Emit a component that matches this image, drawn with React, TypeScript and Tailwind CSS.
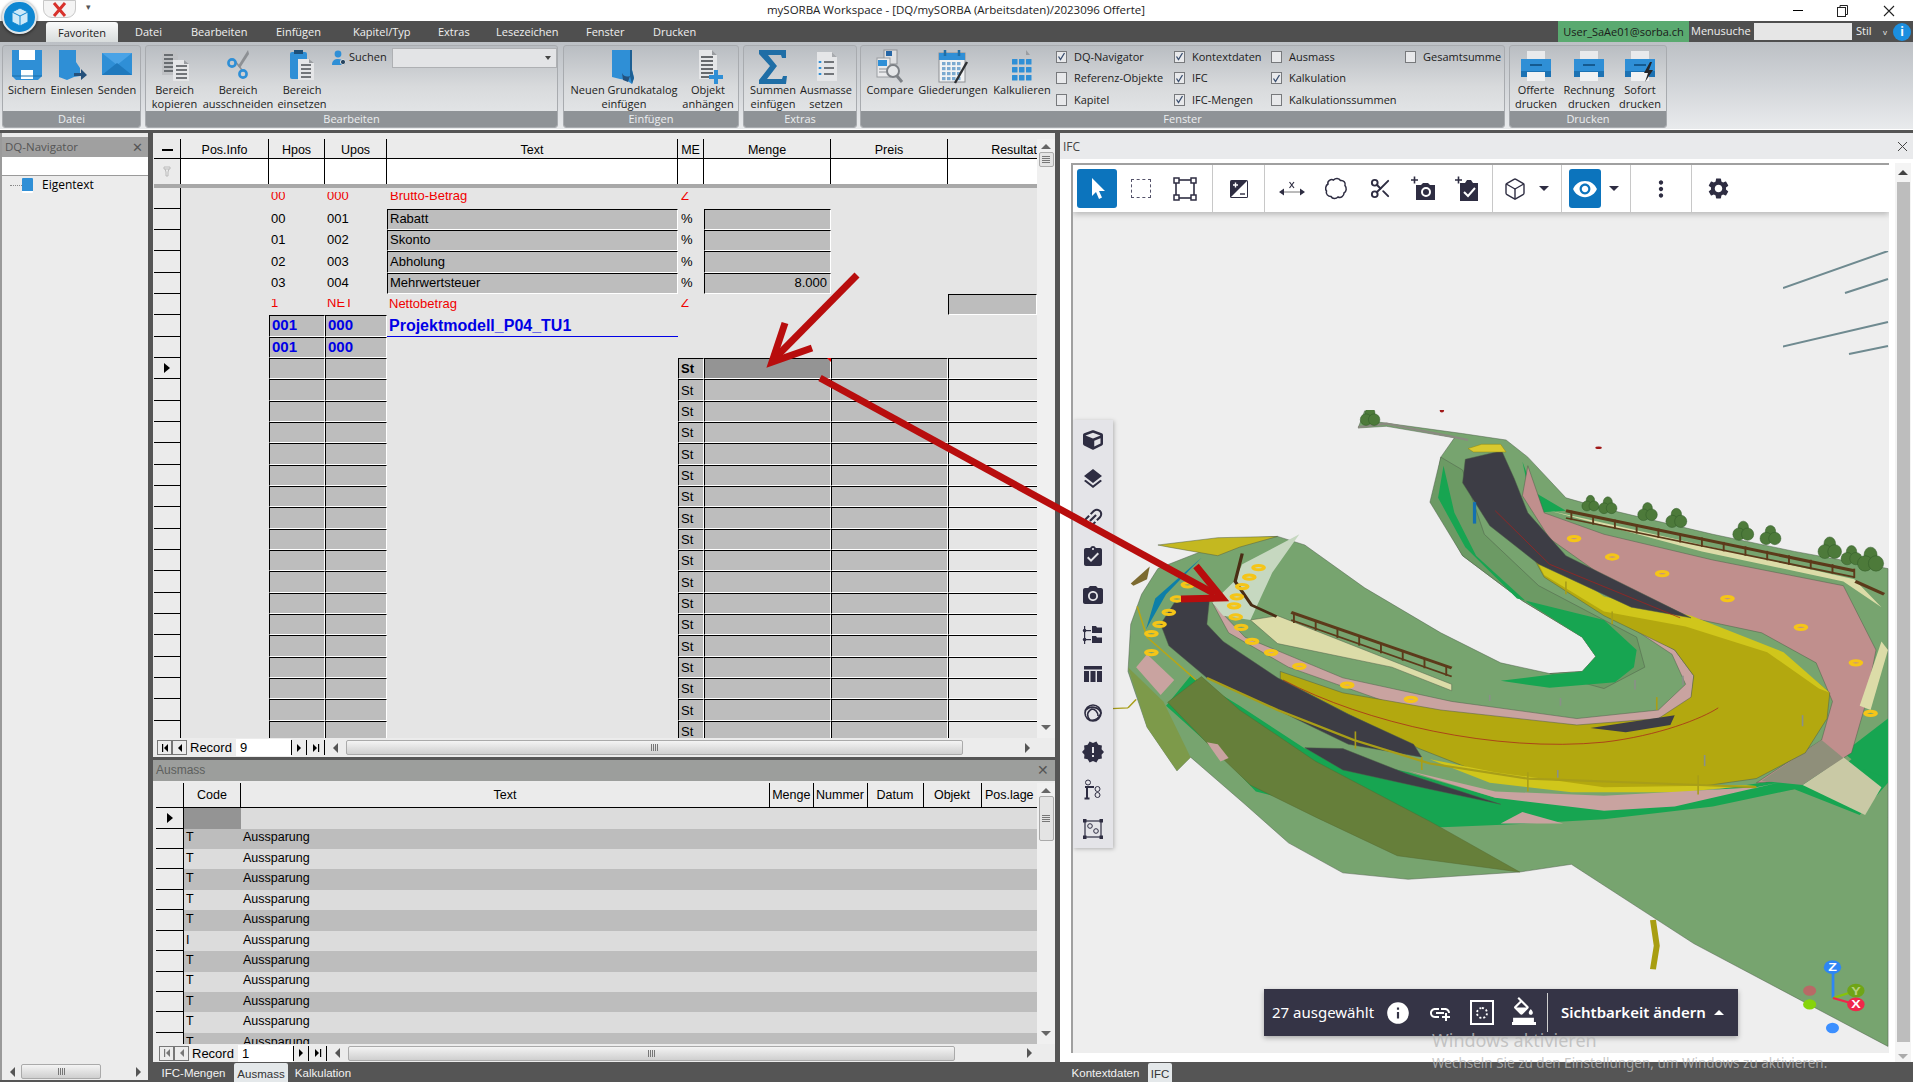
import type { ReactNode } from 'react'
import { Box, Scissors } from 'lucide-react'
import {
  MdAddLink,
  MdAssignmentTurnedIn,
  MdFormatColorFill,
  MdInfo,
  MdLayers,
  MdLink,
  MdMoreVert,
  MdNewReleases,
  MdPhotoCamera,
  MdSettings,
  MdVisibility,
} from 'react-icons/md'
import { FaCube } from 'react-icons/fa'

const blue = '#2f8fd6'
const navy = '#2e2d42'

/* ---------- ribbon icons ---------- */

function IconSave() {
  return (
    <svg width="32" height="32" viewBox="0 0 32 32">
      <path d="M1 1h30v26l-4 4H5l-4-4z" fill={blue} />
      <rect x="8" y="1" width="16" height="10" fill="#fff" />
      <rect x="10" y="21" width="12" height="9" fill="#fff" />
      <path d="M1 27h30" stroke="#1c6ea8" strokeWidth="1" />
    </svg>
  )
}

function IconBookArrow() {
  return (
    <svg width="32" height="32" viewBox="0 0 32 32">
      <path d="M3 1h17v12l4 6v8l-6 1-7 3-8-3z" fill={blue} />
      <path d="M18 24h7v-4l6 6-6 5v-4h-7z" fill="#25507a" />
    </svg>
  )
}

function IconMail() {
  return (
    <svg width="32" height="32" viewBox="0 0 32 32">
      <rect x="1" y="4" width="30" height="22" fill={blue} />
      <path d="M1 4l15 12L31 4z" fill="#4aa3e6" />
      <path d="M1 26l15-12 15 12z" fill="#1f79bd" />
    </svg>
  )
}

function DocLines({ x, y, w, n, color = '#4b4f55' }: { x: number; y: number; w: number; n: number; color?: string }) {
  return (
    <g stroke={color} strokeWidth="1.6">
      {Array.from({ length: n }).map((_, i) => (
        <path key={i} d={`M${x} ${y + i * 4}h${w}`} />
      ))}
    </g>
  )
}

function IconCopy() {
  return (
    <svg width="32" height="32" viewBox="0 0 32 32">
      <path d="M3 2h13l3 4v20H3z" fill="#bfc1c4" />
      <DocLines x={5} y={6} w={9} n={5} />
      <path d="M14 11h11l5 4v17H14z" fill="#e5e6e8" />
      <path d="M25 11l5 4h-5z" fill="#9a9da1" />
      <DocLines x={17} y={17} w={11} n={4} />
    </svg>
  )
}

function IconCut() {
  return (
    <svg width="32" height="32" viewBox="0 0 32 32">
      <path d="M26 1L16 17l2 2L27 5z" fill="#8d9094" />
      <path d="M13 12l7 9" stroke="#8d9094" strokeWidth="1.6" />
      <circle cx="10" cy="14" r="3.6" fill="none" stroke={blue} strokeWidth="2.6" />
      <circle cx="21" cy="25" r="3.6" fill="none" stroke={blue} strokeWidth="2.6" />
    </svg>
  )
}

function IconPaste() {
  return (
    <svg width="32" height="32" viewBox="0 0 32 32">
      <rect x="4" y="3" width="17" height="27" rx="2" fill={blue} />
      <rect x="8" y="1" width="9" height="4" fill="#1d4f78" />
      <path d="M12 10h11l5 4v17H12z" fill="#e5e6e8" />
      <path d="M23 10l5 4h-5z" fill="#9a9da1" />
      <DocLines x={15} y={16} w={10} n={4} />
    </svg>
  )
}

function IconBook() {
  return (
    <svg width="32" height="36" viewBox="0 0 32 36">
      <path d="M4 1h20v20l2 8-2 6-6-4-6-1-8-2z" fill={blue} />
      <path d="M24 1v20l2 8-2 6-2-8V1z" fill="#1d5f93" />
      <path d="M14 24c2 4 5 4 8 3l-2 6-5-2z" fill="#24527e" />
    </svg>
  )
}

function IconDocPlus() {
  return (
    <svg width="32" height="36" viewBox="0 0 32 36">
      <path d="M7 1h13l5 5v24H7z" fill="#e5e6e8" />
      <path d="M20 1l5 5h-5z" fill="#9a9da1" />
      <DocLines x={9} y={8} w={12} n={6} color="#3b3f44" />
      <path d="M24 21v14M17 28h14" stroke={blue} strokeWidth="4" />
    </svg>
  )
}

function IconSigma() {
  return (
    <svg width="32" height="36" viewBox="0 0 32 36">
      <path d="M2 1h27v8h-4l-1-3H11l9 11-10 13h15l1-3h4l-1 8H2v-4l11-14L2 5z" fill="#1f6ea6" />
    </svg>
  )
}

function IconNumList() {
  return (
    <svg width="32" height="36" viewBox="0 0 32 36">
      <path d="M7 3h15l5 5v24H7z" fill="#e5e6e8" />
      <path d="M22 3l5 5h-5z" fill="#a8abaf" />
      <path d="M10 12v2M10 18v2M10 24v2" stroke={blue} strokeWidth="2.6" />
      <DocLines x={14} y={13} w={10} n={1} />
      <DocLines x={14} y={19} w={10} n={1} />
      <DocLines x={14} y={25} w={10} n={1} />
    </svg>
  )
}

function IconCompare() {
  return (
    <svg width="32" height="36" viewBox="0 0 32 36">
      <rect x="10" y="1" width="13" height="14" fill="#dfe0e2" stroke="#8d9094" />
      <rect x="12" y="2" width="6" height="5" fill="#2566a6" />
      <rect x="3" y="9" width="13" height="19" fill="#e9eaec" stroke="#9a9da1" />
      <rect x="4" y="11" width="9" height="6" fill={blue} />
      <path d="M5 20h8M5 23h8" stroke="#8d9094" />
      <circle cx="19" cy="22" r="6" fill="#e4e6e8" stroke="#7c8085" strokeWidth="2" />
      <path d="M23 27l5 6" stroke="#7c8085" strokeWidth="3" />
    </svg>
  )
}

function IconCalendar() {
  return (
    <svg width="32" height="36" viewBox="0 0 32 36">
      <rect x="2" y="4" width="26" height="29" fill="#f1f2f3" stroke="#8d9094" />
      <rect x="2" y="4" width="26" height="7" fill={blue} />
      <path d="M8 1v6M22 1v6" stroke="#1f6ea6" strokeWidth="2.5" />
      <g fill="#7aa9d0">
        {[13, 18, 23, 28].map((y) =>
          [5, 10, 15, 20].map((x) => <rect key={`${x}-${y}`} x={x} y={y} width="3.5" height="3.2" />),
        )}
      </g>
      <path d="M30 13L18 34" stroke="#2e3033" strokeWidth="2.4" />
    </svg>
  )
}

function IconGrid() {
  return (
    <svg width="32" height="36" viewBox="0 0 32 36">
      <path d="M20 1l4 5h-4z" fill="#9a9da1" />
      <g fill={blue}>
        {[10, 18, 26].map((y) =>
          [6, 13, 20].map((x) => <rect key={`${x}-${y}`} x={x} y={y} width="5.5" height="5.5" rx="0.5" />),
        )}
      </g>
    </svg>
  )
}

function IconPrinter({ flash }: { flash?: boolean }) {
  return (
    <svg width="34" height="34" viewBox="0 0 34 34">
      <rect x="8" y="2" width="18" height="9" fill="#e9eaec" />
      <path d="M2 10h30v18H2z" fill={blue} />
      <path d="M2 22h30v6H2z" fill="#1c72b3" />
      <rect x="8" y="23" width="18" height="9" fill="#f1f2f3" />
      <rect x="11" y="15" width="12" height="2" fill="#145a90" />
      {flash && <path d="M27 13l-6 11h4l-3 9 8-12h-4l3-8z" fill="#26272b" />}
    </svg>
  )
}

function IconUserSearch() {
  return (
    <svg width="16" height="16" viewBox="0 0 16 16">
      <circle cx="7" cy="4" r="3.4" fill={blue} />
      <path d="M1 15c0-5 3-6 6-6s5 1 5 3v3z" fill={blue} />
      <circle cx="12" cy="12" r="2.6" fill="#26445f" stroke="#d8dadc" />
    </svg>
  )
}

/* ---------- ribbon parts ---------- */

function RibbonBtn({ className, icon, label }: { className: string; icon: ReactNode; label: string[] }) {
  return (
    <div className={`${className} shrink-0 flex flex-col items-center text-center`}>
      <div className="h-[35px] pt-[1px] flex items-start justify-center">{icon}</div>
      <div className="leading-[13.5px] whitespace-nowrap">
        {label.map((l) => (
          <div key={l}>{l}</div>
        ))}
      </div>
    </div>
  )
}

function RibbonGroup({ className, title, children }: { className: string; title: string; children: ReactNode }) {
  return (
    <div className={`${className} shrink-0 h-[83px] flex flex-col rounded-[3px] border border-[#a8abaf] overflow-hidden bg-gradient-to-b from-[#b9bdc2] via-[#d8dadc] to-[#e8eaec]`}>
      <div className="flex-1 flex pt-[2px] min-h-0">{children}</div>
      <div className="h-[16px] bg-[#8f9397] text-[#eceef0] text-[11px] leading-[15px] text-center">{title}</div>
    </div>
  )
}

function Check({ label, on }: { label: string; on?: boolean }) {
  return (
    <div className="h-[21.5px] flex items-center gap-[6px] whitespace-nowrap">
      <span className="w-[11px] h-[12px] border border-[#77797c] bg-[#e8e9eb] flex items-center justify-center shrink-0">
        {on && (
          <svg width="9" height="9" viewBox="0 0 9 9">
            <path d="M1.5 4.5l2 3 4-6.5" fill="none" stroke="#3a4f70" strokeWidth="1.3" />
          </svg>
        )}
      </span>
      <span className="ml-[1px]">{label}</span>
    </div>
  )
}

/* ---------- grid parts ---------- */

const colW = ['w-[88px]', 'w-[56px]', 'w-[62px]', 'w-[291px]', 'w-[26px]', 'w-[127px]', 'w-[117px]', 'w-[89px]']
const colNames = ['Pos.Info', 'Hpos', 'Upos', 'Text', 'ME', 'Menge', 'Preis', 'Resultat']

function Gray({ className, children, dark }: { className: string; children?: ReactNode; dark?: boolean }) {
  return (
    <div
      className={`${className} h-full shrink-0 overflow-hidden flex items-center pb-[1px] border-t border-l border-t-black border-l-black border-b border-r border-b-white border-r-white ${
        dark ? 'bg-[#949494]' : 'bg-[#bdbdbd]'
      }`}
    >
      {children}
    </div>
  )
}

function Plain({ className, children }: { className: string; children?: ReactNode }) {
  return <div className={`${className} h-full shrink-0 overflow-hidden flex items-center pb-[1px]`}>{children}</div>
}

function Clip({ children }: { children: ReactNode }) {
  return (
    <span className="block h-[11px] overflow-hidden">
      <span className="block -mt-[4px] leading-[15px]">{children}</span>
    </span>
  )
}

function RowHead({ active, className = 'w-[27px]' }: { active?: boolean; className?: string }) {
  return (
    <div className={`${className} shrink-0 h-full bg-[#ebebeb] border-r border-b border-black flex items-center justify-center`}>
      {active && <span className="w-0 h-0 border-y-[5px] border-y-transparent border-l-[6px] border-l-black" />}
    </div>
  )
}

function RecordBar({ value, dim, thumb, gap }: { value: string; dim?: boolean; thumb: string; gap: string }) {
  const tone = dim ? '#777' : '#000'
  return (
    <div className="h-full flex items-center bg-[#ececec] text-[13px]">
      <div className="w-[3px]" />
      <div className="w-[15px] h-[15px] border border-[#777] flex items-center justify-center text-[8px]" style={{ color: tone }}>
        <svg width="8" height="8" viewBox="0 0 8 8" fill="currentColor">
          <path d="M1 0h1.2v8H1zM7 0v8L3 4z" />
        </svg>
      </div>
      <div className="w-[15px] h-[15px] border border-[#777] flex items-center justify-center" style={{ color: tone }}>
        <svg width="8" height="8" viewBox="0 0 8 8" fill="currentColor">
          <path d="M6 0v8L2 4z" />
        </svg>
      </div>
      <span className="w-[49px] pl-[3px] leading-[15px]">Record</span>
      <span className="w-[55px] h-[17px] bg-white pl-[4px] leading-[17px]">{value}</span>
      <div className="w-[15px] h-[15px] border-l border-black flex items-center justify-center">
        <svg width="8" height="8" viewBox="0 0 8 8">
          <path d="M2 0v8l4-4z" />
        </svg>
      </div>
      <div className="w-[19px] h-[15px] border-l border-r border-black flex items-center justify-center">
        <svg width="8" height="8" viewBox="0 0 8 8">
          <path d="M1 0v8l4-4zM6 0h1.2v8H6z" />
        </svg>
      </div>
      <div className="w-[21px] flex justify-center">
        <svg width="6" height="10" viewBox="0 0 6 10">
          <path d="M5 0v10L0 5z" fill="#555" />
        </svg>
      </div>
      <HThumb className={thumb} />
      <div className={`${gap} flex justify-end`}>
        <svg width="6" height="10" viewBox="0 0 6 10">
          <path d="M0 0v10l5-5z" fill="#555" />
        </svg>
      </div>
    </div>
  )
}

function HThumb({ className }: { className: string }) {
  return (
    <div className={`${className} h-[15px] border border-[#aaa] rounded-[2px] bg-gradient-to-b from-[#f4f4f4] to-[#cfcfcf] flex items-center justify-center`}>
      <div className="flex gap-[1px]">
        {[0, 1, 2, 3].map((i) => (
          <span key={i} className="w-[1px] h-[7px] bg-[#777]" />
        ))}
      </div>
    </div>
  )
}

function VScroll({ thumbTop, thumbH }: { thumbTop: string; thumbH: string }) {
  return (
    <div className="w-[18px] h-full bg-[#f0f0f0] flex flex-col items-center relative">
      <span className="mt-[5px] w-0 h-0 border-x-[5px] border-x-transparent border-b-[5px] border-b-[#666]" />
      <div className={`${thumbTop} ${thumbH} w-[15px] border border-[#aaa] rounded-[2px] bg-[#e4e4e4] flex flex-col items-center justify-center gap-[1px]`}>
        {[0, 1, 2, 3].map((i) => (
          <span key={i} className="w-[8px] h-[1px] bg-[#777]" />
        ))}
      </div>
      <span className="mt-auto mb-[8px] w-0 h-0 border-x-[5px] border-x-transparent border-t-[5px] border-t-[#666]" />
    </div>
  )
}

function MainGrid() {
  const red = 'text-[#f00000]'
  const stRows = Array.from({ length: 18 })
  return (
    <div className="h-[624px] bg-[#ececec] pt-[6px] pl-[1px] flex">
      <div className="w-[883px] flex flex-col">
        {/* header */}
        <div className="h-[20px] flex bg-[#ebebeb] border-b border-black text-[12.5px]">
          <div className="w-[27px] shrink-0 border-r border-black flex items-center justify-center pt-[3px]">
            <span className="w-[11px] h-[2px] bg-black" />
          </div>
          {colNames.map((n, i) => (
            <div key={n} className={`${colW[i]} shrink-0 border-r border-black flex items-center justify-center pt-[3px] ${i === 7 ? 'justify-end border-r-0 overflow-hidden' : ''}`}>
              {n}
            </div>
          ))}
        </div>
        {/* filter row */}
        <div className="h-[25px] flex bg-white">
          <div className="w-[27px] shrink-0 bg-[#ebebeb] border-r border-black flex items-center justify-center">
            <svg width="8" height="11" viewBox="0 0 8 11" fill="none" stroke="#bbb">
              <path d="M1 1h6v2H1zM2 3l1 3v4h2V6l1-3" />
            </svg>
          </div>
          {colW.map((w, i) => (
            <div key={w + i} className={`${w} shrink-0 ${i === 7 ? '' : 'border-r border-black'}`} />
          ))}
        </div>
        <div className="h-[4px] bg-[#a8a8a8]" />
        {/* rows */}
        <div className="h-[550px] overflow-hidden bg-[#e5e5e5] text-[13px]">
          <div className={`h-[20.7px] flex ${red}`}>
            <RowHead />
            <Plain className="w-[88px]" />
            <Plain className="w-[56px] pl-[2px]"><Clip>00</Clip></Plain>
            <Plain className="w-[62px] pl-[2px]"><Clip>000</Clip></Plain>
            <Plain className="w-[291px] pl-[3px]"><Clip>Brutto-Betrag</Clip></Plain>
            <Plain className="w-[26px] pl-[3px]"><Clip>Z</Clip></Plain>
          </div>
          {[
            ['00', '001', 'Rabatt', ''],
            ['01', '002', 'Skonto', ''],
            ['02', '003', 'Abholung', ''],
            ['03', '004', 'Mehrwertsteuer', '8.000'],
          ].map(([h, u, t, m]) => (
            <div key={u} className="h-[21.33px] flex">
              <RowHead />
              <Plain className="w-[88px]" />
              <Plain className="w-[56px] pl-[2px]">{h}</Plain>
              <Plain className="w-[62px] pl-[2px]">{u}</Plain>
              <Gray className="w-[291px] pl-[2px]">{t}</Gray>
              <Plain className="w-[26px] pl-[3px]">%</Plain>
              <Gray className="w-[127px] justify-end pr-[3px]">{m}</Gray>
            </div>
          ))}
          <div className={`h-[21.33px] flex ${red}`}>
            <RowHead />
            <Plain className="w-[88px]" />
            <Plain className="w-[56px] pl-[2px]"><Clip>1</Clip></Plain>
            <Plain className="w-[62px] pl-[2px]"><Clip>NET</Clip></Plain>
            <Plain className="w-[291px] pl-[2px]">Nettobetrag</Plain>
            <Plain className="w-[26px] pl-[3px]"><Clip>Z</Clip></Plain>
            <Plain className="w-[127px]" />
            <Plain className="w-[117px]" />
            <Gray className="w-[89px]" />
          </div>
          <div className="h-[21.33px] flex text-[#0000e6] font-bold">
            <RowHead />
            <Plain className="w-[88px]" />
            <Gray className="w-[56px] pl-[2px] text-[15px]">001</Gray>
            <Gray className="w-[62px] pl-[2px] text-[15px]">000</Gray>
            <div className="w-[291px] h-full shrink-0 pl-[2px] flex items-center text-[16px] border-b border-[#0000e6] whitespace-nowrap">
              Projektmodell_P04_TU1
            </div>
          </div>
          <div className="h-[21.33px] flex text-[#0000e6] font-bold">
            <RowHead />
            <Plain className="w-[88px]" />
            <Gray className="w-[56px] pl-[2px] text-[15px]">001</Gray>
            <Gray className="w-[62px] pl-[2px] text-[15px]">000</Gray>
          </div>
          {stRows.map((_, i) => (
            <div key={i} className="h-[21.33px] flex">
              <RowHead active={i === 0} />
              <Plain className="w-[88px]" />
              <Gray className="w-[56px]" />
              <Gray className="w-[62px]" />
              <Plain className="w-[291px]" />
              <Gray className={`w-[26px] pl-[2px] ${i === 0 ? 'font-bold' : ''}`}>
                <span className="mt-[2px]">St</span>
              </Gray>
              <div className="w-[127px] h-full shrink-0 relative">
                <Gray className="w-full" dark={i === 0} />
                {i === 0 && <span className="absolute right-0 top-0 w-0 h-0 border-t-[4px] border-t-[#f00000] border-l-[4px] border-l-transparent" />}
              </div>
              <Gray className="w-[117px]" />
              <div className="w-[89px] h-full shrink-0 border-t border-t-black border-l border-l-black border-b border-b-white" />
            </div>
          ))}
        </div>
        <div className="h-[19px]">
          <RecordBar value="9" thumb="w-[617px]" gap="w-[68px]" />
        </div>
      </div>
      <div className="w-[18px] h-[599px]">
        <VScroll thumbTop="mt-[3px]" thumbH="h-[15px]" />
      </div>
    </div>
  )
}

function AusmassPanel() {
  const heads: [string, string][] = [
    ['Menge', 'w-[43.5px]'],
    ['Nummer', 'w-[54px]'],
    ['Datum', 'w-[56px]'],
    ['Objekt', 'w-[58px]'],
    ['Pos.lage', 'w-[55.5px]'],
  ]
  return (
    <div className="h-[302px] bg-[#ececec] flex flex-col">
      <div className="h-[21px] bg-[#9c9e9c] text-[#5c5e5c] text-[12px] leading-[21px] pl-[3px] flex justify-between pr-[6px]">
        <span>Ausmass</span>
        <span className="text-[#555] text-[14px]">✕</span>
      </div>
      <div className="flex-1 min-h-0 flex pt-[2px] pl-[3px]">
        <div className="w-[881px] flex flex-col">
          <div className="h-[25px] flex bg-[#ebebeb] border-b border-black text-[12.5px]">
            <div className="w-[28px] shrink-0 border-r border-black" />
            <div className="w-[57px] shrink-0 border-r border-black flex items-center justify-center">Code</div>
            <div className="w-[529px] shrink-0 border-r border-black flex items-center justify-center">Text</div>
            {heads.map(([n, w], i) => (
              <div key={n} className={`${w} shrink-0 flex items-center justify-center whitespace-nowrap overflow-hidden ${i < 4 ? 'border-r border-black' : ''}`}>
                {n}
              </div>
            ))}
          </div>
          <div className="h-[236px] overflow-hidden text-[12.5px]">
            <div className="h-[20.5px] flex bg-[#dcdcdc]">
              <RowHead active className="w-[28px]" />
              <div className="w-[57px] h-full bg-[#949494]" />
            </div>
            {['T', 'T', 'T', 'T', 'T', 'I', 'T', 'T', 'T', 'T', 'T'].map((c, i) => (
              <div key={i} className={`h-[20.45px] flex items-center ${i % 2 === 0 ? 'bg-[#bdbdbd]' : 'bg-[#dcdcdc]'}`}>
                <RowHead className="w-[28px]" />
                <span className="w-[57px] shrink-0 pl-[2px] -mt-[2px]">{c}</span>
                <span className="pl-[2px] -mt-[2px]">Aussparung</span>
              </div>
            ))}
          </div>
          <div className="h-[18px]">
            <RecordBar value="1" dim thumb="w-[607px]" gap="w-[78px]" />
          </div>
        </div>
        <div className="w-[19px] h-[261px]">
          <VScroll thumbTop="mt-[3px]" thumbH="h-[45px]" />
        </div>
      </div>
    </div>
  )
}

/* ---------- viewer toolbar icons ---------- */

function ContrastIcon() {
  return (
    <svg width="20" height="20" viewBox="0 0 20 20">
      <rect x="1" y="1" width="18" height="18" rx="1.5" fill={navy} />
      <path d="M18 2v16H2z" fill="#fff" />
      <path d="M4 6h5M6.5 3.5v5" stroke="#fff" strokeWidth="1.4" />
      <path d="M11 15h5" stroke={navy} strokeWidth="1.4" />
    </svg>
  )
}

function MeasureIcon() {
  return (
    <svg width="26" height="20" viewBox="0 0 26 20">
      <path d="M3 13h20" stroke="#777" strokeWidth="1" />
      <path d="M0 13l5-3.4v6.8zM26 13l-5-3.4v6.8z" fill={navy} />
      <path d="M10.5 3l4.5 6M15 3l-4.5 6" stroke={navy} strokeWidth="1.2" />
    </svg>
  )
}

function CloudIcon() {
  return (
    <svg width="24" height="24" viewBox="0 0 24 24" fill="none" stroke={navy} strokeWidth="1.5">
      <path d="M4 7C3 4 7 1.500 9.500 3c2-2 5.500-2 7 .5 3-.5 5.500 2 4.500 5 2 2.500 1.500 6-1 7.500 0 3-3 5.500-6 4-2 2-5.500 2-7-.5-3 0-5.500-2.500-4.500-5.500C1 12 1.500 8.500 4 7z" />
    </svg>
  )
}

function CameraPlus() {
  return (
    <svg width="26" height="26" viewBox="0 0 26 26">
      <path d="M5 9h5l2-2h5l2 2h5v15H5z" fill={navy} />
      <circle cx="15" cy="16" r="4" fill="none" stroke="#fff" strokeWidth="2" />
      <path d="M0 4h7M3.500.5v7" stroke={navy} strokeWidth="1.6" />
    </svg>
  )
}

function ClipPlus() {
  return (
    <svg width="26" height="26" viewBox="0 0 26 26">
      <path d="M5 7h5l2-3h4l2 3h5v18H5z" fill={navy} />
      <path d="M9 16l4 4 7-8" fill="none" stroke="#fff" strokeWidth="2" />
      <path d="M0 4h7M3.500.5v7" stroke={navy} strokeWidth="1.6" />
    </svg>
  )
}

function BoxSelect() {
  return (
    <svg width="24" height="24" viewBox="0 0 24 24" fill="none" stroke={navy}>
      <rect x="3" y="3" width="18" height="18" strokeWidth="1.6" />
      {[
        [1, 1],
        [18, 1],
        [1, 18],
        [18, 18],
      ].map(([x, y]) => (
        <rect key={`${x}${y}`} x={x} y={y} width="5" height="5" fill="#fff" strokeWidth="1.5" />
      ))}
    </svg>
  )
}

function TreeIcon() {
  return (
    <svg width="22" height="22" viewBox="0 0 22 22" fill={navy}>
      <path d="M2 2h1.200v18H2z" />
      <path d="M2 6h7v1.200H2zM2 15h7v1.200H2z" />
      <circle cx="2.600" cy="6.600" r="1.800" />
      <circle cx="2.600" cy="15.600" r="1.800" />
      <path d="M10 2h4l1 1.500h5V9H10zM10 12h4l1 1.500h5V19H10z" />
    </svg>
  )
}

function TableIcon() {
  return (
    <svg width="20" height="20" viewBox="0 0 20 20" fill={navy}>
      <rect x="1" y="2" width="18" height="3.500" />
      <rect x="1" y="7" width="5" height="11" />
      <rect x="7.500" y="7" width="5" height="11" />
      <rect x="14" y="7" width="5" height="11" />
    </svg>
  )
}

function RingsIcon() {
  return (
    <svg width="20" height="20" viewBox="0 0 20 20" fill="none" stroke={navy} strokeWidth="1.6">
      <circle cx="10" cy="10" r="8" />
      <path d="M3 7c4-5 13-3 15 3-2 5-6 8-11 7-3-3-4-8 2-11 3 0 6 3 6 7" />
    </svg>
  )
}

function TreeGearIcon() {
  return (
    <svg width="20" height="22" viewBox="0 0 20 22" fill="none" stroke={navy}>
      <circle cx="5" cy="3.500" r="2.500" />
      <circle cx="14.500" cy="10" r="2.500" />
      <circle cx="14.500" cy="16" r="2.500" />
      <path d="M2 8h9M4 8v12" strokeWidth="2" />
      <path d="M1.500 19.500h5" strokeWidth="2" />
    </svg>
  )
}

function ModelGearIcon() {
  return (
    <svg width="22" height="22" viewBox="0 0 22 22" fill="none" stroke={navy}>
      <rect x="3" y="3" width="16" height="16" strokeWidth="1.200" />
      <g fill={navy} stroke="none">
        <rect x="1" y="1" width="3.500" height="3.500" />
        <rect x="17.500" y="1" width="3.500" height="3.500" />
        <rect x="1" y="17.500" width="3.500" height="3.500" />
        <rect x="17.500" y="17.500" width="3.500" height="3.500" />
      </g>
      <circle cx="8" cy="8" r="2.300" />
      <circle cx="14" cy="13" r="2.300" />
    </svg>
  )
}

function Tool({ className, children }: { className: string; children: ReactNode }) {
  return <div className={`${className} h-full shrink-0 flex items-center justify-center`}>{children}</div>
}

function Caret() {
  return <span className="w-0 h-0 border-x-[5px] border-x-transparent border-t-[5px] border-t-[#2e2d42]" />
}

function ViewerToolbar() {
  return (
    <div className="relative z-10 h-[47px] bg-white shadow-[0_2px_6px_rgba(0,0,0,0.25)] flex">
      <div className="w-[140px] shrink-0 flex border-r border-[#c8c8c8] py-[4px] pl-[4px]">
        <Tool className="w-[40px] bg-[#0c74bd] rounded-[3px]">
          <svg width="20" height="24" viewBox="0 0 20 24">
            <path d="M5 1v18l4-4 3 7 3-1.500-3-6.500h6z" fill="#fff" />
          </svg>
        </Tool>
        <Tool className="w-[48px]">
          <div className="w-[20px] h-[19px] border-[1.5px] border-dashed border-[#55536a]" />
        </Tool>
        <Tool className="w-[40px]"><BoxSelect /></Tool>
      </div>
      <div className="w-[52px] shrink-0 border-r border-[#c8c8c8] flex items-center justify-center"><ContrastIcon /></div>
      <div className="w-[228px] shrink-0 border-r border-[#c8c8c8] flex pl-[5px]">
        <Tool className="w-[44px]"><MeasureIcon /></Tool>
        <Tool className="w-[44px]"><CloudIcon /></Tool>
        <Tool className="w-[44px]"><Scissors size={23} color={navy} strokeWidth={2} /></Tool>
        <Tool className="w-[44px]"><CameraPlus /></Tool>
        <Tool className="w-[44px]"><ClipPlus /></Tool>
      </div>
      <div className="w-[69px] shrink-0 border-r border-[#c8c8c8] flex pl-[3px]">
        <Tool className="w-[38px]"><Box size={24} color={navy} strokeWidth={1.4} /></Tool>
        <Tool className="w-[20px]"><Caret /></Tool>
      </div>
      <div className="w-[69px] shrink-0 border-r border-[#c8c8c8] flex py-[4px] pl-[7px]">
        <Tool className="w-[32px] bg-[#0c74bd] rounded-[3px]"><MdVisibility size={26} color="#fff" /></Tool>
        <Tool className="w-[26px]"><Caret /></Tool>
      </div>
      <div className="w-[61px] shrink-0 border-r border-[#c8c8c8] flex items-center justify-center"><MdMoreVert size={26} color={navy} /></div>
      <div className="w-[53px] shrink-0 flex items-center justify-center"><MdSettings size={25} color={navy} /></div>
    </div>
  )
}

function SideToolbar() {
  const items = [
    <FaCube key="a" size={20} color={navy} />,
    <MdLayers key="b" size={24} color={navy} />,
    <MdLink key="c" size={26} color={navy} className="-rotate-45" />,
    <MdAssignmentTurnedIn key="d" size={24} color={navy} />,
    <MdPhotoCamera key="e" size={24} color={navy} />,
    <TreeIcon key="f" />,
    <TableIcon key="g" />,
    <RingsIcon key="h" />,
    <MdNewReleases key="i" size={24} color={navy} />,
    <TreeGearIcon key="j" />,
    <ModelGearIcon key="k" />,
  ]
  return (
    <div className="absolute left-0 top-[255px] w-[40px] h-[428px] bg-[#e4e4e8] shadow-[1px_1px_4px_rgba(0,0,0,0.25)] pt-[1px] flex flex-col">
      {items.map((it, i) => (
        <div key={i} className="h-[38.9px] flex items-center justify-center shrink-0">
          {it}
        </div>
      ))}
    </div>
  )
}

/* ---------- the road model, in 1568x1568 sheet units stretched over 853x672 ---------- */

const ovals: [number, number][] = [
  [365, 368], [348, 390], [335, 412], [325, 436], [320, 457], [323, 483], [333, 507], [353, 540], [388, 566],
  [440, 598], [528, 642], [645, 675], [168, 522], [183, 500], [200, 472], [215, 441], [235, 408], [168, 566],
  [945, 300], [1015, 343], [1107, 382], [1227, 440], [1362, 507], [1463, 590], [1490, 708],
]
const trees: [number, number, number][] = [
  [975, 220, 13], [1007, 225, 14], [1080, 240, 15], [1133, 255, 16], [1256, 285, 16], [1306, 295, 16],
  [1415, 325, 18], [1455, 342, 16], [1490, 352, 20], [570, 18, 15],
]
const posts: [number, number, number][] = [
  [930, 400, 30], [1015, 470, 30], [1057, 630, 22], [1097, 670, 30], [1145, 620, 22], [1365, 712, 26], [1185, 805, 26],
  [790, 665, 14], [920, 672, 18], [860, 845, 45], [1173, 852, 45], [543, 750, 40], [915, 840, 18], [665, 810, 30],
]

function RoadModel() {
  return (
    <svg className="absolute left-[-13px] top-[245px] w-[853px] h-[672px]" viewBox="0 0 1568 1568" preserveAspectRatio="none">
      <g stroke="#4d5d48" strokeWidth="1">
        {/* terrain */}
        <path fill="#77a46f" d="M860 950L1522 860V1485L1165 1245L940 1060L845 1078L640 1095L520 1080L420 1010L340 920L240 810L215 842L160 740L125 610L130 500L150 430L180 370L260 330L330 300L400 295L450 315L560 415L700 520L810 590L900 615L960 610L985 575L960 530L850 445L740 340L685 215L700 110L725 65L600 38L548 42L560 2L585 28L740 55L820 70L860 110L930 205L1000 230L1200 290L1350 330L1522 370V860Z" />
        <path fill="#6c9a64" d="M680 215L740 340L850 445L960 530L985 575L960 610L900 615L1000 650L1075 600L1060 530L1000 490L880 410L780 290L740 140L700 110Z" />
        <path fill="#7d9a4a" stroke="none" d="M125 600L160 740L215 842L240 810L190 680Z" />
        {/* bright green bands */}
        <path fill="#17a551" stroke="none" d="M195 690L300 810L360 890L470 925L680 975L860 965L1000 955L1200 925L1350 885L1470 945L1522 870V790L1470 800L1440 830L1340 860L1130 900L800 905L640 845L450 790L330 690L240 620Z" />
        <path fill="#17a551" stroke="none" d="M705 130L695 205L745 320L840 440L1000 490L1060 560L1055 600L1020 635L900 648L810 632L900 618L960 610L985 575L960 530L860 450L765 340L725 240Z" />
        <path fill="#17a551" stroke="none" d="M850 120L870 190L930 235L870 240Z" />
        <path fill="#17a551" stroke="none" d="M1440 800L1522 720V860L1480 840Z" />
        {/* olive plane */}
        <path fill="#667f3a" stroke="#55692f" d="M260 622L198 682L280 790L350 875L470 950L620 1040L845 1078L680 960L470 820L330 700Z" />
        {/* pink field, right */}
        <path fill="#c08f8d" d="M860 130L890 240L1000 290L1200 350L1440 410L1500 560L1480 690L1455 800L1380 860L1280 870L1400 770L1420 680L1390 590L1290 520L1160 485L1000 390L900 300L850 200Z" />
        <path fill="#dcdca8" stroke="none" d="M900 235L1460 395L1510 460L1440 400L1180 330Z" />
        <path fill="#dcdca8" stroke="none" d="M1510 540L1522 560L1490 700L1470 690Z" />
        <path fill="#c9c9a5" stroke="none" d="M1365 875L1440 810L1510 880L1480 945Z" />
        <path fill="#8f8f7a" stroke="none" d="M1290 865L1400 770L1440 812L1365 875Z" />
        {/* pink strip, inner */}
        <path fill="#c9a3a0" d="M280 450L340 530L520 625L720 680L950 720L1100 700L1150 640L1125 570L1030 490L1130 560L1165 620L1160 680L1120 720L1000 740L800 725L620 690L420 600L310 520Z" />
        {/* yellow plate */}
        <path fill="#b3a80f" d="M860 320L1000 440L1160 485L1330 570L1415 660L1410 720L1370 800L1280 860L1140 885L940 885L800 860L660 790L530 710L405 628V610L520 660L700 700L950 735L1100 720L1160 670L1165 620L1130 560L1000 480L890 390Z" />
        <path fill="#d0c61b" stroke="none" d="M860 310L1000 435L1160 480L1330 565L1415 660L1395 650L1300 565L1150 505L1000 470L890 385Z" />
        <path fill="#d0c61b" stroke="none" d="M680 815L800 845L1000 880L1280 875L1140 892L940 892L790 870Z" />
        {/* dark roadway */}
        <path fill="#3d3d45" d="M745 115L812 95L835 160L860 240L930 340L1160 485L1050 460L880 360L790 270L740 170Z" />
        <path fill="#3d3d45" d="M275 440L210 450L185 500L200 550L270 625L400 700L530 780L665 810L650 780L530 710L400 625L300 540L270 500Z" />
        <path fill="#3d3d45" d="M450 788L520 790L640 850L810 920L680 885L520 840Z" />
        <path fill="#3d3d45" stroke="none" d="M975 742L1130 712L1122 735L1040 752Z" />
        {/* pink strip, outer */}
        <path fill="#c9a3a0" stroke="none" d="M640 842L800 890L1000 900L1280 880L1320 870L1130 925L1000 935L800 905Z" />
        <path fill="#c9a3a0" stroke="none" d="M810 965L850 938L925 965Z" />
        <path fill="#c9a3a0" stroke="none" d="M140 600L160 570L210 630L185 665Z" />
        <path fill="#c9a3a0" stroke="none" d="M270 775L290 780L310 812L295 820Z" />
        {/* left tip, wall and cream bands */}
        <path fill="#dcdca8" d="M350 490L400 480L720 640L720 655L610 600L400 545Z" />
        <path fill="#c6d8c0" stroke="none" d="M280 450L320 400L335 360L440 290L390 380L350 490L300 480Z" />
        <path fill="#0d7fa8" stroke="none" d="M260 345L175 440L158 512L195 430Z" />
        <path fill="#c4b820" d="M180 315L290 298L400 295L330 320L290 340L200 320Z" />
        <path fill="#7c6a30" stroke="none" d="M130 405L165 365L160 395L135 410Z" />
        <path fill="none" stroke="#4a2d14" strokeWidth="6" d="M335 335L322 400L352 455L398 482" />
        <path fill="none" stroke="#b8a616" strokeWidth="3" d="M142 458L160 530L250 630" />
        <path fill="none" stroke="#a89e18" strokeWidth="3" d="M125 695L95 697M140 675L125 695" />
      </g>
      {/* far end of the road */}
      <path d="M548 40L600 32L720 62L750 70" fill="none" stroke="#8a8a80" strokeWidth="5" />
      <path d="M750 90l25-10 35 0 10 18H760z" fill="#d9c92e" stroke="#8c8410" />
      {/* thin red centre lines */}
      <path d="M410 630C560 730 800 800 1000 775C1100 760 1180 720 1210 695" fill="none" stroke="#a8201c" strokeWidth="1.500" />
      <path d="M800 235L900 360L1140 485" fill="none" stroke="#a8201c" strokeWidth="1.500" />
      {/* fences */}
      <g fill="none" stroke="#5c3a1a" strokeWidth="7">
        <path d="M930 235L1460 375" />
        <path d="M930 252L1460 390" strokeWidth="4" />
        <path d="M425 472L720 602" />
        <path d="M425 490L720 622" strokeWidth="4" />
        <path d="M1462 400L1515 430" />
      </g>
      <g stroke="#5c3a1a" strokeWidth="3.500">
        {Array.from({ length: 14 }).map((_, i) => (
          <path key={i} d={`M${940 + i * 40} ${235 + i * 10.400}v22`} />
        ))}
        {Array.from({ length: 8 }).map((_, i) => (
          <path key={i} d={`M${430 + i * 40} ${475 + i * 17.600}v22`} />
        ))}
      </g>
      {/* guard rail */}
      <path d="M270 625L400 700L540 770L680 825L860 860L1175 875L1280 880" fill="none" stroke="#a89e18" strokeWidth="5" />
      {/* trees */}
      <g fill="#4d7a3a" stroke="#2f5a28">
        {trees.map(([x, y, r]) => (
          <g key={`${x}`}>
            <ellipse cx={x} cy={y - r * 0.7} rx={r * 0.6} ry={r * 0.9} />
            <ellipse cx={x - r * 0.5} cy={y + r * 0.3} rx={r * 0.7} ry={r * 0.9} />
            <ellipse cx={x + r * 0.5} cy={y + r * 0.3} rx={r * 0.7} ry={r * 0.9} />
          </g>
        ))}
      </g>
      {/* posts */}
      <g stroke="#8a9088" strokeWidth="3">
        {posts.map(([x, y, h]) => (
          <path key={`${x}-${y}`} d={`M${x} ${y}v${h}`} stroke={h > 28 ? '#a89e18' : '#8a9088'} />
        ))}
      </g>
      <path d="M762 215v50" stroke="#1470b0" strokeWidth="6" />
      {/* marked openings */}
      <g fill="none" stroke="#f5c518" strokeWidth="7">
        {ovals.map(([x, y]) => (
          <ellipse key={`${x}-${y}`} cx={x} cy={y} rx="10" ry="5" />
        ))}
      </g>
      <path d="M1090 1190L1097 1250L1090 1305" fill="none" stroke="#a89e10" strokeWidth="11" />
      <ellipse cx="990" cy="88" rx="6" ry="3" fill="#a01818" />
      <ellipse cx="702" cy="2" rx="4" ry="4" fill="#a01818" />
      {/* axis cross */}
      <g>
        <circle cx="1378" cy="1355" r="12" fill="#b86a66" />
        <circle cx="1378" cy="1387" r="12" fill="#86d40a" />
        <circle cx="1420" cy="1442" r="12" fill="#3b8fff" />
        <path d="M1421 1310V1372" stroke="#2e86f5" strokeWidth="5" />
        <path d="M1421 1372L1463 1355" stroke="#86c40a" strokeWidth="5" />
        <path d="M1421 1372L1463 1387" stroke="#f0284a" strokeWidth="5" />
        <circle cx="1420" cy="1300" r="16" fill="#2e86f5" />
        <circle cx="1463" cy="1355" r="16" fill="#6fa516" />
        <circle cx="1463" cy="1387" r="16" fill="#f0284a" />
      </g>
      <g fontFamily="'Liberation Sans', sans-serif" fontWeight="700" fontSize="26" fill="#fff" textAnchor="middle">
        <text x="1420" y="1309">Z</text>
        <text x="1463" y="1364" fill="#b8d080">Y</text>
        <text x="1463" y="1396">X</text>
      </g>
    </svg>
  )
}

function SelectionBar() {
  return (
    <div className="absolute left-[191px] top-[824px] w-[474px] h-[47px] bg-[#353446] shadow-[0_2px_5px_rgba(0,0,0,0.3)] flex items-center text-white font-['Noto_Sans',sans-serif] pl-[8px]">
      <span className="text-[15px] w-[111px] whitespace-nowrap">27 ausgewählt</span>
      <MdInfo size={26} className="ml-[2px]" />
      <MdAddLink size={24} className="ml-[17px]" />
      <span className="ml-[18px] w-[24px] h-[25px] border-2 border-white flex items-center justify-center">
        <span className="w-[12px] h-[12px] border-2 border-dotted border-white rounded-full" />
      </span>
      <span className="ml-[17px] flex flex-col items-center">
        <MdFormatColorFill size={25} className="-mt-[4px]" />
        <span className="w-[24px] h-[3px] bg-white" />
      </span>
      <span className="ml-[11px] w-[1px] h-[39px] bg-[#cfcfcf]" />
      <span className="ml-[13px] text-[15px] font-semibold whitespace-nowrap">Sichtbarkeit ändern</span>
      <span className="ml-[8px] w-0 h-0 border-x-[5px] border-x-transparent border-b-[5px] border-b-white" />
    </div>
  )
}

function BottomTab({ label, active, className }: { label: string; active?: boolean; className: string }) {
  return (
    <div className={`${className} h-full text-center text-[11.5px] leading-[22px] overflow-hidden ${active ? 'bg-[#e4e8ea] text-[#333] rounded-t-[2px]' : 'text-[#f2f2f2]'}`}>
      {label}
    </div>
  )
}

export default function App() {
  const ribbonFont = "font-['Open_Sans',sans-serif] text-[11px] text-[#1c1c1c]"
  const tabs: [string, string][] = [
    ['Datei', 'w-[56px]'],
    ['Bearbeiten', 'w-[85px]'],
    ['Einfügen', 'w-[77px]'],
    ['Kapitel/Typ', 'w-[85px]'],
    ['Extras', 'w-[58px]'],
    ['Lesezeichen', 'w-[90px]'],
    ['Fenster', 'w-[67px]'],
    ['Drucken', 'w-[70px]'],
  ]
  return (
    <div className="relative w-[1913px] h-[1082px] overflow-hidden bg-[#555555] font-['Liberation_Sans',sans-serif] text-black">
      {/* title bar */}
      <div className="h-[21px] bg-white relative flex items-center justify-center pb-[2px] font-['Open_Sans',sans-serif] text-[11.5px] text-[#222]">
        <span className="ml-[-1px]">mySORBA Workspace - [DQ/mySORBA (Arbeitsdaten)/2023096 Offerte]</span>
        <div className="absolute right-0 top-0 h-full flex items-center">
          <span className="w-[45px] flex justify-center">
            <span className="w-[10px] h-[1px] bg-black" />
          </span>
          <span className="w-[45px] flex justify-center">
            <svg width="11" height="12" viewBox="0 0 11 12" fill="none" stroke="#222">
              <rect x="0.500" y="2.500" width="8" height="9" />
              <path d="M3 2.500V.5h7.500v9H8.500" />
            </svg>
          </span>
          <span className="w-[48px] flex justify-center">
            <svg width="12" height="12" viewBox="0 0 12 12" stroke="#222" strokeWidth="1.100">
              <path d="M1 1l10 10M11 1L1 11" />
            </svg>
          </span>
        </div>
      </div>

      {/* tab strip */}
      <div className="h-[21px] bg-[#4f4f4f] flex items-end pl-[46px] font-['Open_Sans',sans-serif] text-[11px]">
        <div className="w-[72px] h-[20px] bg-gradient-to-b from-[#fafbfb] to-[#d8dcdc] rounded-t-[3px] text-center leading-[21px] text-[#222] mr-[17px]">
          Favoriten
        </div>
        {tabs.map(([t, w]) => (
          <div key={t} className={`${w} h-full leading-[22px] text-[#f0f0f0] whitespace-nowrap`}>
            {t}
          </div>
        ))}
        <div className="ml-auto h-full flex items-center text-[#f0f0f0]">
          <div className="w-[131px] h-full bg-[#5aaa70] text-[#1a1a1a] leading-[22px] text-center">User_SaAe01@sorba.ch</div>
          <span className="w-[65px] pl-[2px]">Menusuche</span>
          <div className="w-[98px] h-[17px] bg-[#e6e6e6]" />
          <span className="w-[31px] pl-[4px]">Stil</span>
          <span className="text-[8px] w-[10px]">v</span>
          <span className="w-[18px] h-[18px] rounded-full bg-[#1b8fe0] text-white text-[12px] font-bold flex items-center justify-center mr-[2px]">i</span>
        </div>
      </div>

      {/* ribbon */}
      <div className={`h-[88px] pt-[3px] pl-[2px] flex bg-gradient-to-b from-[#bcc0c5] to-[#e9ebed] border-b border-white ${ribbonFont}`}>
        <RibbonGroup className="w-[139px] mr-[4px]" title="Datei">
          <div className="flex pl-[4px]">
            <RibbonBtn className="w-[40px]" icon={<IconSave />} label={['Sichern']} />
            <RibbonBtn className="w-[50px]" icon={<IconBookArrow />} label={['Einlesen']} />
            <RibbonBtn className="w-[40px]" icon={<IconMail />} label={['Senden']} />
          </div>
        </RibbonGroup>
        <RibbonGroup className="w-[413px] mr-[5px]" title="Bearbeiten">
          <RibbonBtn className="w-[57px]" icon={<IconCopy />} label={['Bereich', 'kopieren']} />
          <RibbonBtn className="w-[70px]" icon={<IconCut />} label={['Bereich', 'ausschneiden']} />
          <RibbonBtn className="w-[58px]" icon={<IconPaste />} label={['Bereich', 'einsetzen']} />
          <div className="h-[19px] flex items-center">
            <IconUserSearch />
            <span className="ml-[2px] w-[43px]">Suchen</span>
            <div className="w-[165px] h-[20px] bg-[#e3e4e6] border border-[#aeb0b3] flex items-center justify-end pr-[5px]">
              <span className="w-0 h-0 border-x-[3px] border-x-transparent border-t-[4px] border-t-[#444]" />
            </div>
          </div>
        </RibbonGroup>
        <RibbonGroup className="w-[176px] mr-[4px]" title="Einfügen">
          <RibbonBtn className="w-[120px]" icon={<IconBook />} label={['Neuen Grundkatalog', 'einfügen']} />
          <RibbonBtn className="w-[48px]" icon={<IconDocPlus />} label={['Objekt', 'anhängen']} />
        </RibbonGroup>
        <RibbonGroup className="w-[114px] mr-[3px]" title="Extras">
          <RibbonBtn className="w-[58px]" icon={<IconSigma />} label={['Summen', 'einfügen']} />
          <RibbonBtn className="w-[48px]" icon={<IconNumList />} label={['Ausmasse', 'setzen']} />
        </RibbonGroup>
        <RibbonGroup className="w-[645px] mr-[4px]" title="Fenster">
          <RibbonBtn className="w-[58px]" icon={<IconCompare />} label={['Compare']} />
          <RibbonBtn className="w-[68px]" icon={<IconCalendar />} label={['Gliederungen']} />
          <RibbonBtn className="w-[70px]" icon={<IconGrid />} label={['Kalkulieren']} />
          <div className="flex -ml-[1px] -mt-[2px]">
            <div className="w-[118px]">
              <Check label="DQ-Navigator" on />
              <Check label="Referenz-Objekte" />
              <Check label="Kapitel" />
            </div>
            <div className="w-[97px]">
              <Check label="Kontextdaten" on />
              <Check label="IFC" on />
              <Check label="IFC-Mengen" on />
            </div>
            <div className="w-[134px]">
              <Check label="Ausmass" />
              <Check label="Kalkulation" on />
              <Check label="Kalkulationssummen" />
            </div>
            <Check label="Gesamtsumme" />
          </div>
        </RibbonGroup>
        <RibbonGroup className="w-[158px]" title="Drucken">
          <RibbonBtn className="w-[52px]" icon={<IconPrinter />} label={['Offerte', 'drucken']} />
          <RibbonBtn className="w-[54px]" icon={<IconPrinter />} label={['Rechnung', 'drucken']} />
          <RibbonBtn className="w-[48px]" icon={<IconPrinter flash />} label={['Sofort', 'drucken']} />
        </RibbonGroup>
      </div>

      {/* workspace */}
      <div className="pt-[3px] flex h-[952px]">
        {/* navigator */}
        <div className="w-[148px] h-[947px] bg-[#ececec] border-l-2 border-[#9a9a9a] flex flex-col">
          <div className="h-[4px]" />
          <div className="h-[20px] bg-[#a0a0a0] text-[#555] text-[11.5px] leading-[20px] pl-[3px] flex justify-between pr-[5px] font-['Open_Sans',sans-serif]">
            <span>DQ-Navigator</span>
            <span className="text-[13px]">✕</span>
          </div>
          <div className="h-[19px] bg-white border-b border-[#9a9a9a]" />
          <div className="h-[20px] -mt-[1px] flex items-center text-[12px] pl-[8px] font-['Open_Sans',sans-serif]">
            <span className="w-[12px] border-t border-dotted border-[#888]" />
            <span className="w-[11px] h-[15px] bg-[#2f8fd6] rounded-[1px] border-b-2 border-white" />
            <span className="ml-[9px]">Eigentext</span>
          </div>
          <div className="mt-auto h-[17px] flex items-center pl-[8px] pr-[6px] justify-between">
            <svg width="6" height="10" viewBox="0 0 6 10">
              <path d="M5 0v10L0 5z" fill="#555" />
            </svg>
            <HThumb className="w-[80px] -ml-[30px]" />
            <svg width="6" height="10" viewBox="0 0 6 10">
              <path d="M0 0v10l5-5z" fill="#555" />
            </svg>
          </div>
        </div>

        {/* centre column */}
        <div className="w-[902px] ml-[5px] flex flex-col">
          <MainGrid />
          <div className="h-[3px]" />
          <AusmassPanel />
          <div className="h-[20px] flex bg-[#555555]">
            <BottomTab className="w-[81px]" label="IFC-Mengen" />
            <BottomTab className="w-[54px] mt-[1px]" label="Ausmass" active />
            <BottomTab className="w-[70px]" label="Kalkulation" />
          </div>
        </div>

        {/* IFC viewer */}
        <div className="w-[853px] ml-[5px] flex flex-col">
          <div className="h-[26px] bg-[#e9eaec] text-[#444] text-[12px] font-['Open_Sans',sans-serif] flex justify-between pl-[3px] pr-[5px] pt-[5px]">
            <span>IFC</span>
            <svg width="11" height="11" viewBox="0 0 11 11" stroke="#444" className="mt-[3px]">
              <path d="M1 1l9 9M10 1l-9 9" />
            </svg>
          </div>
          <div className="h-[903px] bg-white flex pl-[11px] pt-[4px]">
            <div className="relative w-[818px] h-[890px] overflow-hidden bg-[#eeeeee] border-l-2 border-t-2 border-[#a0a0a0]">
              <ViewerToolbar />
              <RoadModel />
              <svg className="absolute left-[710px] top-[86px] w-[110px] h-[106px]" viewBox="1783 251 110 106" stroke="#6f8a90" strokeWidth="2">
                <path d="M1783 288L1888 251M1845 293L1888 279M1764 351L1888 322M1849 354L1888 346" />
              </svg>
              <SideToolbar />
              <SelectionBar />
            </div>
            <div className="w-[16px] h-full ml-[6px] bg-[#f4f4f4] flex flex-col items-center">
              <span className="mt-[7px] w-0 h-0 border-x-[5px] border-x-transparent border-b-[5px] border-b-[#444]" />
              <div className="mt-[7px] w-[13px] h-[860px] bg-[#bdbdbd]" />
              <span className="mt-auto mb-[3px] w-0 h-0 border-x-[5px] border-x-transparent border-t-[5px] border-t-[#aaa]" />
            </div>
          </div>
          <div className="h-[20px] flex pl-[3px]">
            <BottomTab className="w-[85px]" label="Kontextdaten" />
            <BottomTab className="w-[24px] mt-[1px]" label="IFC" active />
          </div>
        </div>
      </div>

      {/* app orb, quick access */}
      <div className="absolute left-[43px] top-0 w-[33px] h-[18px] rounded-b-[9px] border border-[#c8c8c8] bg-[#f4f4f4] flex items-center justify-center">
        <svg width="17" height="15" viewBox="0 0 17 15" stroke="#d8322c" strokeWidth="3">
          <path d="M3 1l11 13M14 1L3 14" />
        </svg>
      </div>
      <div className="absolute left-[86px] top-[3px] text-[9px] leading-[9px] text-[#555]">▾</div>
      <div className="absolute left-[2px] top-0 w-[35px] h-[34px] rounded-full bg-[#0f87d2] border-2 border-[#dfe6ea] shadow-[0_1px_3px_rgba(0,0,0,0.6)] flex items-center justify-center">
        <svg width="22" height="22" viewBox="0 0 22 22" fill="#cfe9f8" stroke="#0f87d2">
          <path d="M11 2l8 4v10l-8 4-8-4V6z" />
          <path d="M3 6l8 4 8-4M11 10v10" fill="none" />
        </svg>
      </div>

      {/* drawn-on arrows */}
      <svg className="absolute inset-0 pointer-events-none" width="1913" height="1082" viewBox="0 0 1913 1082" fill="none" stroke="#b80d0d" strokeWidth="7">
        <path d="M857 275L776 357" />
        <path d="M785 323L772 362L812 348" />
        <path d="M820 378L1215 594" />
        <path d="M1196 566L1222 598L1181 599" />
      </svg>

      {/* activation watermark */}
      <div className="absolute left-[1432px] top-[1028px] font-['Noto_Sans',sans-serif] text-[#b8b8b8]/80 pointer-events-none whitespace-nowrap">
        <div className="text-[18px] leading-[24px]">Windows aktivieren</div>
        <div className="text-[13.5px] leading-[20px] mt-[1px]">Wechseln Sie zu den Einstellungen, um Windows zu aktivieren.</div>
      </div>
    </div>
  )
}
